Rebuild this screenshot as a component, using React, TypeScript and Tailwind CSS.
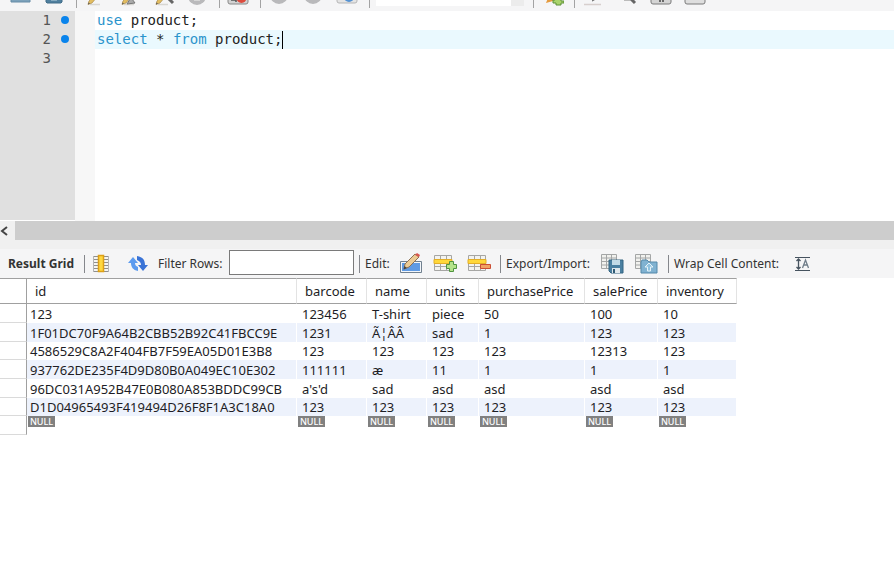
import { useState, type ReactNode } from "react";

const columns = [
  { label: "id", width: "w-[270px]" },
  { label: "barcode", width: "w-[70px]" },
  { label: "name", width: "w-[60px]" },
  { label: "units", width: "w-[52px]" },
  { label: "purchasePrice", width: "w-[106px]" },
  { label: "salePrice", width: "w-[73px]" },
  { label: "inventory", width: "w-[79px]" },
];

const rows = [
  ["123", "123456", "T-shirt", "piece", "50", "100", "10"],
  ["1F01DC70F9A64B2CBB52B92C41FBCC9E", "1231", "Ã¦ÂÂ", "sad", "1", "123", "123"],
  ["4586529C8A2F404FB7F59EA05D01E3B8", "123", "123", "123", "123", "12313", "123"],
  ["937762DE235F4D9D80B0A049EC10E302", "111111", "æ", "11", "1", "1", "1"],
  ["96DC031A952B47E0B080A853BDDC99CB", "a's'd", "sad", "asd", "asd", "asd", "asd"],
  ["D1D04965493F419494D26F8F1A3C18A0", "123", "123", "123", "123", "123", "123"],
];

function TopButton({ label, children }: { label: string; children: ReactNode }) {
  return (
    <button type="button" aria-label={label} className="flex w-[34px] shrink-0 justify-center">
      <svg width="24" height="10" viewBox="0 0 24 10" fill="none">
        {children}
      </svg>
    </button>
  );
}

function TopDivider() {
  return (
    <span className="flex h-2 w-[7px] shrink-0 justify-end pr-px">
      <span className="w-px bg-[#a3a3a3]" />
    </span>
  );
}

function Pencil() {
  return (
    <>
      <path d="M7 4.5h10" stroke="#d8d7d3" strokeWidth="1.5" />
      <path d="M5 4.500 6 1l4-4h4L9 3z" fill="#e3bd60" stroke="#a98a4c" strokeWidth=".7" />
      <path d="m5 4.500.5-2 1.500 1z" fill="#555" />
    </>
  );
}

function TopToolbar() {
  return (
    <div className="flex h-[11px] items-start overflow-hidden bg-[#f5f5f6] pl-[3px]">
      <TopButton label="Open script">
        <path d="M3-2h19v4H3z" fill="#7da2bb" stroke="#678ca6" />
      </TopButton>
      <TopButton label="Save script">
        <path d="M4-2h16v4l-1 1H5L4 2z" fill="#4f7f9e" stroke="#416c88" />
        <path d="M9-1h6v2H9z" fill="#86aabf" />
      </TopButton>
      <TopDivider />
      <TopButton label="Execute">
        <Pencil />
      </TopButton>
      <TopButton label="Execute current statement">
        <Pencil />
        <path d="M10 4 13-1h2l3 4z" fill="#aaa" stroke="#777" />
      </TopButton>
      <TopButton label="Explain">
        <Pencil />
        <path d="m17-2 5 5" stroke="#666" strokeWidth="3" />
      </TopButton>
      <TopButton label="Stop">
        <circle cx="12" cy="-4" r="9" fill="#b9b9bb" />
        <path d="M9-2h6v3H9z" fill="#d6d6d6" />
      </TopButton>
      <TopDivider />
      <TopButton label="Toggle stop on error">
        <rect x="2" y="-8" width="20" height="12" rx="2" fill="#d2d2d2" stroke="#888" />
        <path d="M5 0h5V-2v4" stroke="#555" strokeWidth="1.500" />
        <circle cx="15.500" cy="-2" r="5" fill="#dd4b3e" />
      </TopButton>
      <TopDivider />
      <TopButton label="Commit">
        <circle cx="12" cy="-5" r="9" fill="#b9b9bb" />
      </TopButton>
      <TopButton label="Rollback">
        <circle cx="12" cy="-5" r="9" fill="#b9b9bb" />
      </TopButton>
      <TopButton label="Toggle autocommit">
        <rect x="2" y="-8" width="20" height="11" rx="2" fill="#e4e4e4" stroke="#b5b5b5" />
        <circle cx="14" cy="-3" r="5" fill="#5592d2" />
      </TopButton>
      <TopDivider />
      <select aria-label="Row limit" className="ml-[5px] h-[6px] w-[135px] shrink-0 appearance-none bg-white" />
      <span className="h-[6px] w-[13px] shrink-0 bg-[#ececec]" />
      <span className="w-1 shrink-0" />
      <TopDivider />
      <TopButton label="Beautify">
        <path d="m6 3 2-5h5v3z" fill="#e59b3f" />
        <path d="M15-3h6v4h3v2h-3v2h-5V3h-3V0h2z" fill="#a9d36b" stroke="#5c9037" />
      </TopButton>
      <TopDivider />
      <TopButton label="Find">
        <path d="M3 4.500h17" stroke="#d7cfcd" strokeWidth="1.500" />
        <path d="m11 1 4-3h2z" fill="#777" stroke="#777" />
      </TopButton>
      <TopButton label="Search">
        <path d="m14-3 6 6" stroke="#666" strokeWidth="3" />
        <path d="M9 .5h6" stroke="#bbb" />
      </TopButton>
      <TopButton label="Invisible characters">
        <rect x="2" y="-8" width="20" height="12" rx="2" fill="#d4d4d4" stroke="#7b7b7b" />
        <path d="M11-2v4M14-2v4" stroke="#444" strokeWidth="1.5" />
      </TopButton>
      <TopButton label="Wrap lines">
        <rect x="2" y="-8" width="20" height="12" rx="2" fill="#dedede" stroke="#7b7b7b" />
      </TopButton>
    </div>
  );
}

function Editor() {
  return (
    <div className="flex h-[210px] bg-white font-['DejaVu_Sans_Mono','Liberation_Mono',monospace] text-[14px] leading-[19px] text-[#222]">
      <div className="mb-px w-[75px] shrink-0 bg-[#e0e0e0] text-[#555]">
        {[1, 2, 3].map((line) => (
          <div key={line} className="flex h-[19px] items-center">
            <span className="w-[51px] text-right">{line}</span>
            {line < 3 && <span className="mb-px ml-[10px] size-2 rounded-full bg-[#0a84ec]" />}
          </div>
        ))}
      </div>
      <div className="w-5 shrink-0 bg-[#f7f7f7]" />
      <div className="min-w-0 flex-1 whitespace-pre">
        <div className="h-[19px] pl-[2px]">
          <span className="text-[#2a94cc]">use</span> product;
        </div>
        <div className="flex h-[19px] items-center bg-[#eaf9fe] pl-[2px]">
          <span className="text-[#2a94cc]">select</span> * <span className="text-[#2a94cc]">from</span>
          {" product;"}
          <span className="h-[18px] w-px bg-black" />
        </div>
      </div>
    </div>
  );
}

function Scrollbar() {
  return (
    <div className="flex h-[19px] bg-[#f0f0f0]">
      <button type="button" aria-label="Scroll left" className="flex w-[15px] items-center">
        <svg width="9" height="10" viewBox="0 0 9 10" fill="none" stroke="#444" strokeWidth="2">
          <path d="M7 1 2 5l5 4" />
        </svg>
      </button>
      <div className="flex-1 bg-[#cdcdcd]" />
    </div>
  );
}

function Divider() {
  return <span className="h-[18px] w-px shrink-0 bg-[#85878c]" />;
}

function IconButton({ label, children }: { label: string; children: ReactNode }) {
  return (
    <button type="button" aria-label={label} className="w-6 shrink-0">
      <svg width="24" height="22" viewBox="0 0 24 22" fill="none">
        {children}
      </svg>
    </button>
  );
}

function GridWithHighlight() {
  return (
    <>
      <path d="M1.500 2.500h17v15h-17z" fill="#f3f3f0" stroke="#a6a6a4" />
      <path d="M1 6.500h18M1 13.500h18M7.500 2v16M13.500 2v16" stroke="#a6a6a4" />
      <path d="M1 6.500h18v4H1z" fill="#ffd83a" stroke="#e3ae28" />
    </>
  );
}

function ExportGrid() {
  return (
    <>
      <path d="M1.500 1.500h15v14h-15z" fill="#f1f1ee" stroke="#a4a6a6" />
      <path d="M1 5h15M1 8.500h15M1 12h15M6.500 1v14M11.500 1v14" stroke="#a4a6a6" />
    </>
  );
}

function ResultToolbar() {
  const [filter, setFilter] = useState("");

  return (
    <div className="flex h-[29px] items-center bg-[#f5f5f6] pl-2 text-[12px] whitespace-nowrap text-[#333]">
      <span className="w-[76px] shrink-0 font-bold">Result Grid</span>
      <Divider />
      <button type="button" aria-label="Form view" className="ml-[7px] shrink-0">
        <svg width="18" height="20" viewBox="0 0 18 20" fill="none">
          <path d="M1 2h16v16H1z" fill="#f5f5f2" />
          <path d="M1 2.500h16M1 5.500h16M1 8.500h16M1 11.500h16M1 14.500h16M1 17.500h16" stroke="#8f8f8f" />
          <path d="M1.500 2v16M16.500 2v16" stroke="#b5b5b5" />
          <path d="M6.500 1.500h5v16h-5z" fill="#ffd83f" stroke="#dda017" strokeWidth="1.500" />
        </svg>
      </button>
      <button type="button" aria-label="Refresh" className="ml-[18px] shrink-0">
        <svg width="20" height="18" viewBox="0 0 20 18">
          <path d="M5 2 0 8h3c0 4 2 7 7 8V12c-2-1-3-2-3-4h3z" fill="#5c9bef" />
          <path d="m15 16 5-6h-3c0-5-2-8-8-9v4c3 1 4 3 4 5h-3z" fill="#3a73d6" />
        </svg>
      </button>
      <label htmlFor="filter-rows" className="ml-[10px] w-[71px] shrink-0">
        Filter Rows:
      </label>
      <input
        id="filter-rows"
        type="text"
        value={filter}
        onChange={(e) => setFilter(e.target.value)}
        className="mr-[5px] mb-[2px] h-[25px] w-[125px] shrink-0 border border-[#7a7a7a] bg-white px-1 outline-none"
      />
      <Divider />
      <span className="ml-[5px] w-[34px] shrink-0">Edit:</span>
      <div className="flex w-[101px] shrink-0 gap-[10px]">
        <IconButton label="Edit row">
          <path d="M1.500 8.500h21v11h-21z" fill="#f2f6fa" stroke="#71808f" />
          <path d="M3 10h18v8H3z" fill="#5f9ae3" />
          <path d="m5 16 1-5L16 1l4 3-10 10z" fill="#eccb94" stroke="#8e7152" />
          <path d="m16 2 2-2 3 2-1 2z" fill="#d95750" />
          <path d="m4.500 16.500 1-3.500 2.500 2z" fill="#444" />
        </IconButton>
        <IconButton label="Insert row">
          <GridWithHighlight />
          <path d="M16.500 8.500h4v3h3v4h-3v3h-4v-3h-3v-4h3z" fill="#b4e38a" stroke="#4f9340" />
        </IconButton>
        <IconButton label="Delete row">
          <GridWithHighlight />
          <path d="M13.500 11.500h10v4h-10z" fill="#f1a264" stroke="#cb4e34" />
        </IconButton>
      </div>
      <Divider />
      <span className="ml-[5px] w-[94px] shrink-0">Export/Import:</span>
      <div className="flex w-[68px] shrink-0 gap-[10px]">
        <IconButton label="Export recordset">
          <ExportGrid />
          <path d="M9 7h14v13H11l-2-2z" fill="#4b80a1" stroke="#356581" />
          <path d="M12 7h8v5h-8z" fill="#c3dbe7" />
          <path d="M12 15h8v5h-8z" fill="#e1e9ed" />
          <path d="M13 16h2v4h-2z" fill="#315b75" />
        </IconButton>
        <IconButton label="Import records">
          <ExportGrid />
          <path d="M7 20V9l1-2h5l2 2h8v11z" fill="#80b2d1" stroke="#5489aa" />
          <path d="m15 10-4 4h2.500v4h3v-4H19z" fill="#8fc2df" stroke="#e4f2f8" />
        </IconButton>
      </div>
      <Divider />
      <span className="ml-[5px] w-[121px] shrink-0">Wrap Cell Content:</span>
      <button type="button" aria-label="Wrap cell content" className="shrink-0">
        <svg width="15" height="16" viewBox="0 0 15 16" fill="none" stroke="#46535f">
          <path d="M0 1.500h15M0 14.500h15" />
          <path d="M3.500 3v10M1.500 5l2-2 2 2M1.500 11l2 2 2-2" strokeWidth="1.300" />
          <path d="m7.500 12 3-8 3 8M8.500 9h4" stroke="#6f7d89" strokeWidth="1.300" />
        </svg>
      </button>
    </div>
  );
}

function ResultGrid() {
  return (
    <table className="w-[737px] table-fixed border-separate border-spacing-0 text-[13px] leading-[16px] text-[#1d1d25]">
      <thead>
        <tr className="h-[26px]">
          <th className="w-[27px] border-y border-r border-[#a0a0a0]" aria-label="Row" />
          {columns.map((column) => (
            <th
              key={column.label}
              className={`${column.width} border-y border-y-[#a0a0a0] border-r border-r-[#e3e3e3] p-0 pl-2 text-left font-normal`}
            >
              {column.label}
            </th>
          ))}
        </tr>
      </thead>
      <tbody>
        {rows.map((row) => (
          <tr key={row[0]} className="group h-[19px] nth-[3n]:h-[18px]">
            <td className="border-r border-b border-r-[#a0a0a0] border-b-[#dadada] p-0" />
            {row.map((cell, i) => (
              <td
                key={i}
                className="border-r border-white p-0 pl-[5px] whitespace-nowrap group-even:bg-[#edf2fc] nth-2:pl-[3px]"
              >
                {cell}
              </td>
            ))}
          </tr>
        ))}
        <tr className="h-[19px]">
          <td className="border-r border-b border-r-[#a0a0a0] border-b-[#dadada] p-0" />
          {columns.map((column) => (
            <td key={column.label} className="p-0 pl-px align-top">
              <span className="block h-[11px] w-[27px] bg-[#808080] text-center text-[9px] leading-[11px] font-medium text-white">
                NULL
              </span>
            </td>
          ))}
        </tr>
      </tbody>
    </table>
  );
}

export default function App() {
  return (
    <main className="min-h-screen overflow-hidden bg-white font-['Noto_Sans','Open_Sans',sans-serif]">
      <TopToolbar />
      <Editor />
      <Scrollbar />
      <div className="h-[9px] bg-[#f0f0f0]" />
      <ResultToolbar />
      <ResultGrid />
    </main>
  );
}
